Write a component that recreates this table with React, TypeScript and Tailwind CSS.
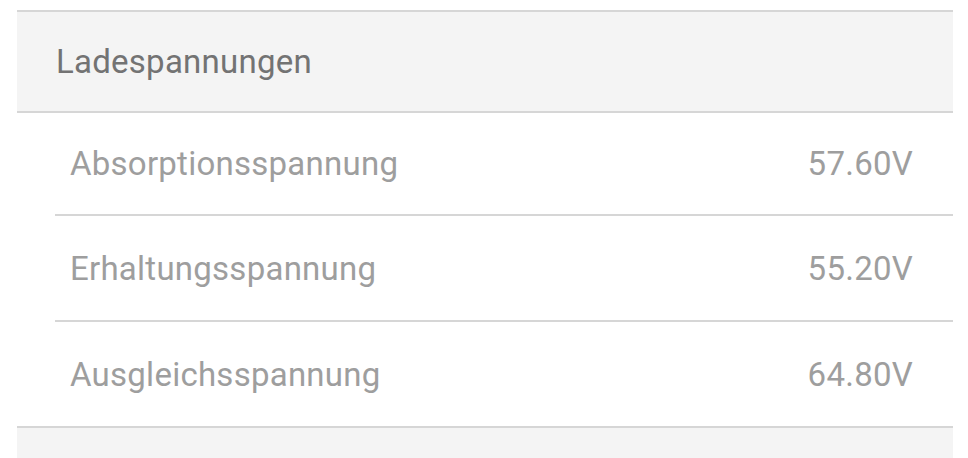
const rows = [
  { label: 'Absorptionsspannung', value: '57.60V', h: 'h-[103px]' },
  { label: 'Erhaltungsspannung', value: '55.20V', h: 'h-[106px]' },
  { label: 'Ausgleichsspannung', value: '64.80V', h: 'h-[106px]' },
]

export default function App() {
  return (
    <div className="min-h-[458px] bg-white pt-[10px] font-['Roboto',sans-serif] tracking-[0.25px]">
      <div className="ml-[17px] mr-[15px]">
        {/* Section header */}
        <div className="flex h-[103px] items-center border-y-2 border-[#d6d6d6] bg-[#f4f4f4] pl-[39px]">
          <span className="text-[33px] leading-none text-[#737373]">Ladespannungen</span>
        </div>

        {/* Rows */}
        <div className="bg-white">
          {rows.map((row, i) => (
            <div
              key={row.label}
              className={`${row.h} flex items-center justify-between border-b-2 border-[#d6d6d6] pr-[40px] ${
                i === rows.length - 1 ? 'pl-[53px]' : 'ml-[38px] pl-[15px]'
              }`}
            >
              <span className="text-[33px] leading-none text-[#9e9e9e]">{row.label}</span>
              <span className="text-[33px] leading-none text-[#9e9e9e]">{row.value}</span>
            </div>
          ))}
        </div>

        <div className="h-[40px] bg-[#f4f4f4]" />
      </div>
    </div>
  )
}
